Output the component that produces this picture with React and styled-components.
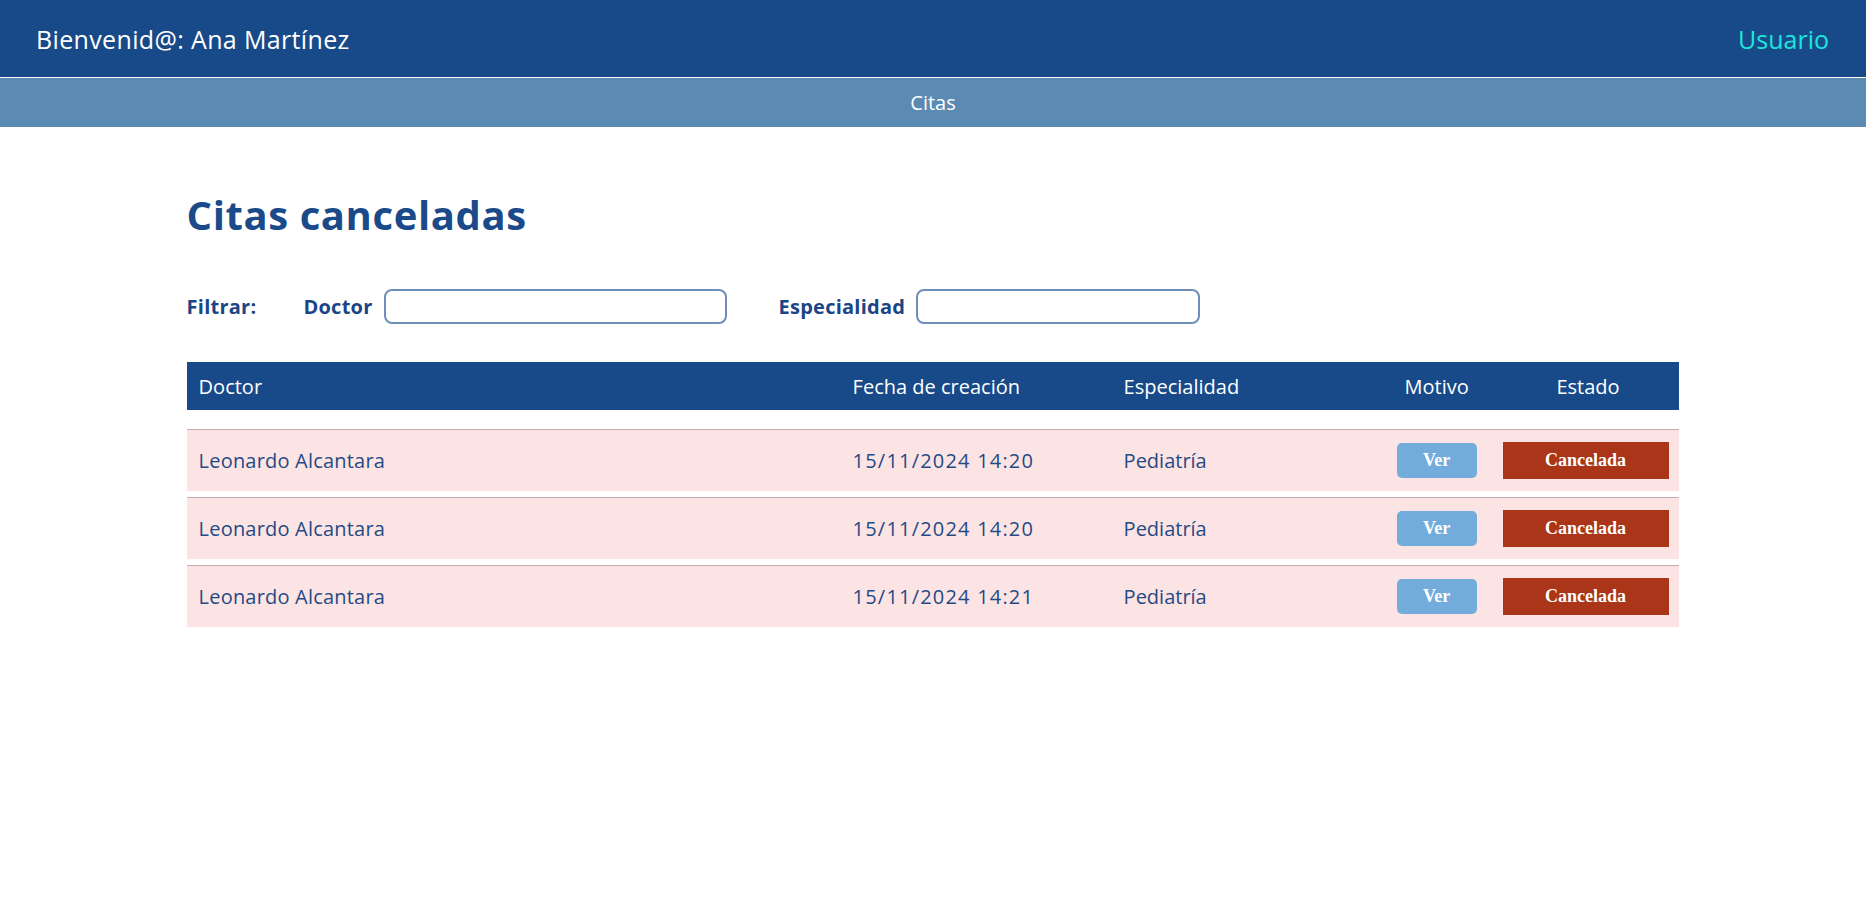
import styled, { createGlobalStyle } from "styled-components";

const GlobalStyle = createGlobalStyle`
  body {
    margin: 0;
    background: #ffffff;
    font-family: "Open Sans", "DejaVu Sans", sans-serif;
  }
`;

const TopBar = styled.header`
  display: flex;
  align-items: center;
  justify-content: space-between;
  height: 77px;
  padding: 0 37px 0 36px;
  background: #184a8a;
  border-bottom: 1px solid #ffffff;

  .welcome {
    color: #ffffff;
    font-size: 25px;
    letter-spacing: 0.35px;
  }
  .user {
    color: #1de6d8;
    font-size: 25px;
  }
`;

const SubNav = styled.nav`
  display: flex;
  align-items: center;
  justify-content: center;
  height: 49px;
  background: #5b8bb3;
  color: #ffffff;
  font-size: 20px;
`;

const Main = styled.main`
  padding: 0 10%;
`;

const Title = styled.h1`
  margin: 60px 0 0;
  color: #1a4a8a;
  font-size: 40px;
  font-weight: 700;
  letter-spacing: 0.6px;
`;

const FilterRow = styled.div`
  display: flex;
  align-items: center;
  margin-top: 47px;
  color: #1b4585;
  font-size: 20px;
  font-weight: 700;
  letter-spacing: 0.25px;

  .lead {
    margin-right: 47px;
  }
`;

const FilterGroup = styled.label`
  display: flex;
  align-items: center;
  gap: 11px;
  margin-right: 52px;
`;

const Input = styled.input`
  box-sizing: border-box;
  width: ${(p) => p.$w}px;
  height: 35px;
  border: 2px solid #6f8fbb;
  border-radius: 8px;
  outline: none;
  background: #ffffff;
`;

const Grid = styled.div`
  display: grid;
  grid-template-columns: 654px 271px 255px 136px minmax(0, 1fr);
  align-items: center;
`;

const HeadRow = styled(Grid)`
  margin-top: 38px;
  height: 48px;
  background: #184a8a;
  color: #ffffff;
  font-size: 20px;
`;

const Rows = styled.div`
  display: flex;
  flex-direction: column;
  gap: 6px;
  margin-top: 19px;
`;

const Row = styled(Grid)`
  height: 61px;
  border-top: 1px solid #c4adb0;
  background: #fde4e4;
  color: #244a86;
  font-size: 20px;
`;

const Cell = styled.div`
  padding: 0 12px;
  letter-spacing: ${(p) => p.$spacing || 0}px;
`;

const CenterCell = styled.div`
  display: flex;
  justify-content: center;
  padding-left: ${(p) => p.$left || 0}px;
  padding-right: ${(p) => p.$right || 0}px;
`;

const StatusCell = styled.div`
  display: flex;
  justify-content: flex-start;
`;

const VerButton = styled.button`
  width: 80px;
  height: 35px;
  border: none;
  border-radius: 5px;
  background: #72acdc;
  color: #ffffff;
  font-family: "Liberation Serif", serif;
  font-weight: 700;
  font-size: 18px;
  cursor: pointer;
`;

const Status = styled.div`
  display: flex;
  align-items: center;
  justify-content: center;
  width: 166px;
  height: 37px;
  background: #aa3518;
  color: #ffffff;
  font-family: "Liberation Serif", serif;
  font-weight: 700;
  font-size: 18px;
`;

const citas = [
  { id: 1, doctor: "Leonardo Alcantara", fecha: "15/11/2024 14:20", esp: "Pediatría" },
  { id: 2, doctor: "Leonardo Alcantara", fecha: "15/11/2024 14:20", esp: "Pediatría" },
  { id: 3, doctor: "Leonardo Alcantara", fecha: "15/11/2024 14:21", esp: "Pediatría" },
];

const App = () => {
  return (
    <>
      <GlobalStyle />
      <TopBar>
        <span className="welcome">Bienvenid@: Ana Martínez</span>
        <span className="user">Usuario</span>
      </TopBar>
      <SubNav>Citas</SubNav>
      <Main>
        <Title>Citas canceladas</Title>
        <FilterRow>
          <span className="lead">Filtrar:</span>
          <FilterGroup>
            Doctor <Input $w={343} />
          </FilterGroup>
          <FilterGroup>
            Especialidad <Input $w={284} />
          </FilterGroup>
        </FilterRow>
        <HeadRow>
          <Cell>Doctor</Cell>
          <Cell>Fecha de creación</Cell>
          <Cell>Especialidad</Cell>
          <CenterCell $left={4}>Motivo</CenterCell>
          <CenterCell $right={6}>Estado</CenterCell>
        </HeadRow>
        <Rows>
          {citas.map((c) => (
            <Row key={c.id}>
              <Cell $spacing={0.2}>{c.doctor}</Cell>
              <Cell $spacing={1.2}>{c.fecha}</Cell>
              <Cell>{c.esp}</Cell>
              <CenterCell $left={4}>
                <VerButton>Ver</VerButton>
              </CenterCell>
              <StatusCell>
                <Status>Cancelada</Status>
              </StatusCell>
            </Row>
          ))}
        </Rows>
      </Main>
    </>
  );
};

export default App;
